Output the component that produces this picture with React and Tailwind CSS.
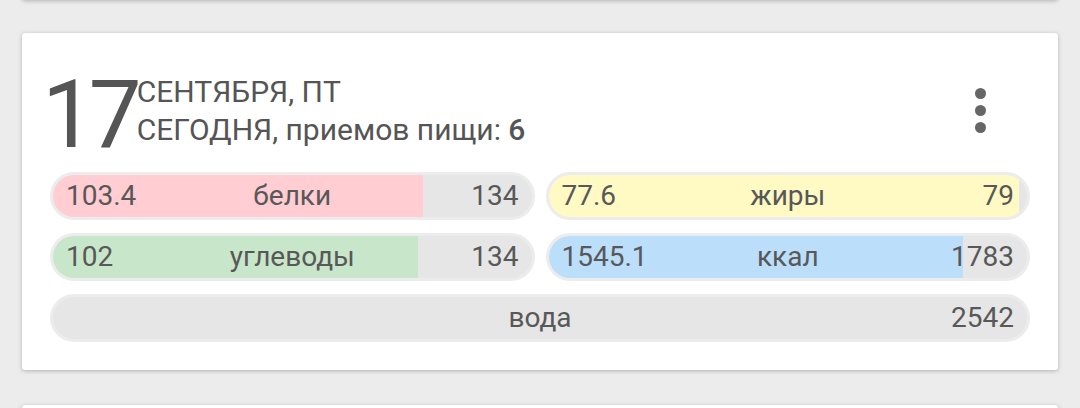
const bars = [
  { left: "103.4", label: "белки", right: "134", pct: (103.4 / 134) * 100, color: "#ffcdd2" },
  { left: "77.6", label: "жиры", right: "79", pct: (77.6 / 79) * 100, color: "#fff9c4" },
  { left: "102", label: "углеводы", right: "134", pct: (102 / 134) * 100, color: "#c8e6c9" },
  { left: "1545.1", label: "ккал", right: "1783", pct: (1545.1 / 1783) * 100, color: "#bbdefb" },
];

function Bar({ left, label, right, pct, color, className = "" }) {
  return (
    <div className={"rounded-full bg-[#ececec] p-[3px] " + className}>
      <div
        className="grid h-[42px] grid-cols-[1fr_auto_1fr] items-center rounded-full bg-[#e6e6e6] px-[13px] text-[28px] leading-none text-[#585858]"
        style={{ background: `linear-gradient(to right, ${color} ${pct}%, #e6e6e6 ${pct}%)` }}
      >
        <span className="justify-self-start">{left}</span>
        <span>{label}</span>
        <span className="justify-self-end">{right}</span>
      </div>
    </div>
  );
}

export default function App() {
  return (
    <div className="flex h-[408px] flex-col overflow-hidden bg-[#ececec] px-[22px] font-['Roboto',sans-serif]">
      <div className="-mt-[40px] h-[40px] shrink-0 rounded-[3px] bg-white shadow-[0_1px_4px_rgba(0,0,0,0.25)]" />

      <div className="mt-[33px] h-[337px] shrink-0 rounded-[3px] bg-white px-[28px] pt-[35px] shadow-[0_1px_4px_rgba(0,0,0,0.25)]">
        <div className="flex items-start">
          <div className="-ml-[8px] text-[94px] leading-none tracking-[-6px] text-[#555]">17</div>
          <div className="ml-[1px] mt-[5px] text-[30px] leading-[38px] text-[#555]">
            <div>СЕНТЯБРЯ, ПТ</div>
            <div>
              СЕГОДНЯ, приемов пищи: <span className="font-medium">6</span>
            </div>
          </div>
          <div className="ml-auto mr-[44px] mt-[20px] flex flex-col gap-[6px]">
            <div className="h-[11px] w-[11px] rounded-full bg-[#666]" />
            <div className="h-[11px] w-[11px] rounded-full bg-[#666]" />
            <div className="h-[11px] w-[11px] rounded-full bg-[#666]" />
          </div>
        </div>

        <div className="mt-[10px] grid grid-cols-2 gap-x-[11px] gap-y-[13px]">
          {bars.map((b) => (
            <Bar key={b.label} {...b} />
          ))}
          <Bar className="col-span-2" left="" label="вода" right="2542" pct={0} color="#e6e6e6" />
        </div>
      </div>

      <div className="mt-[35px] h-[60px] shrink-0 rounded-[3px] bg-white shadow-[0_1px_4px_rgba(0,0,0,0.25)]" />
    </div>
  );
}
